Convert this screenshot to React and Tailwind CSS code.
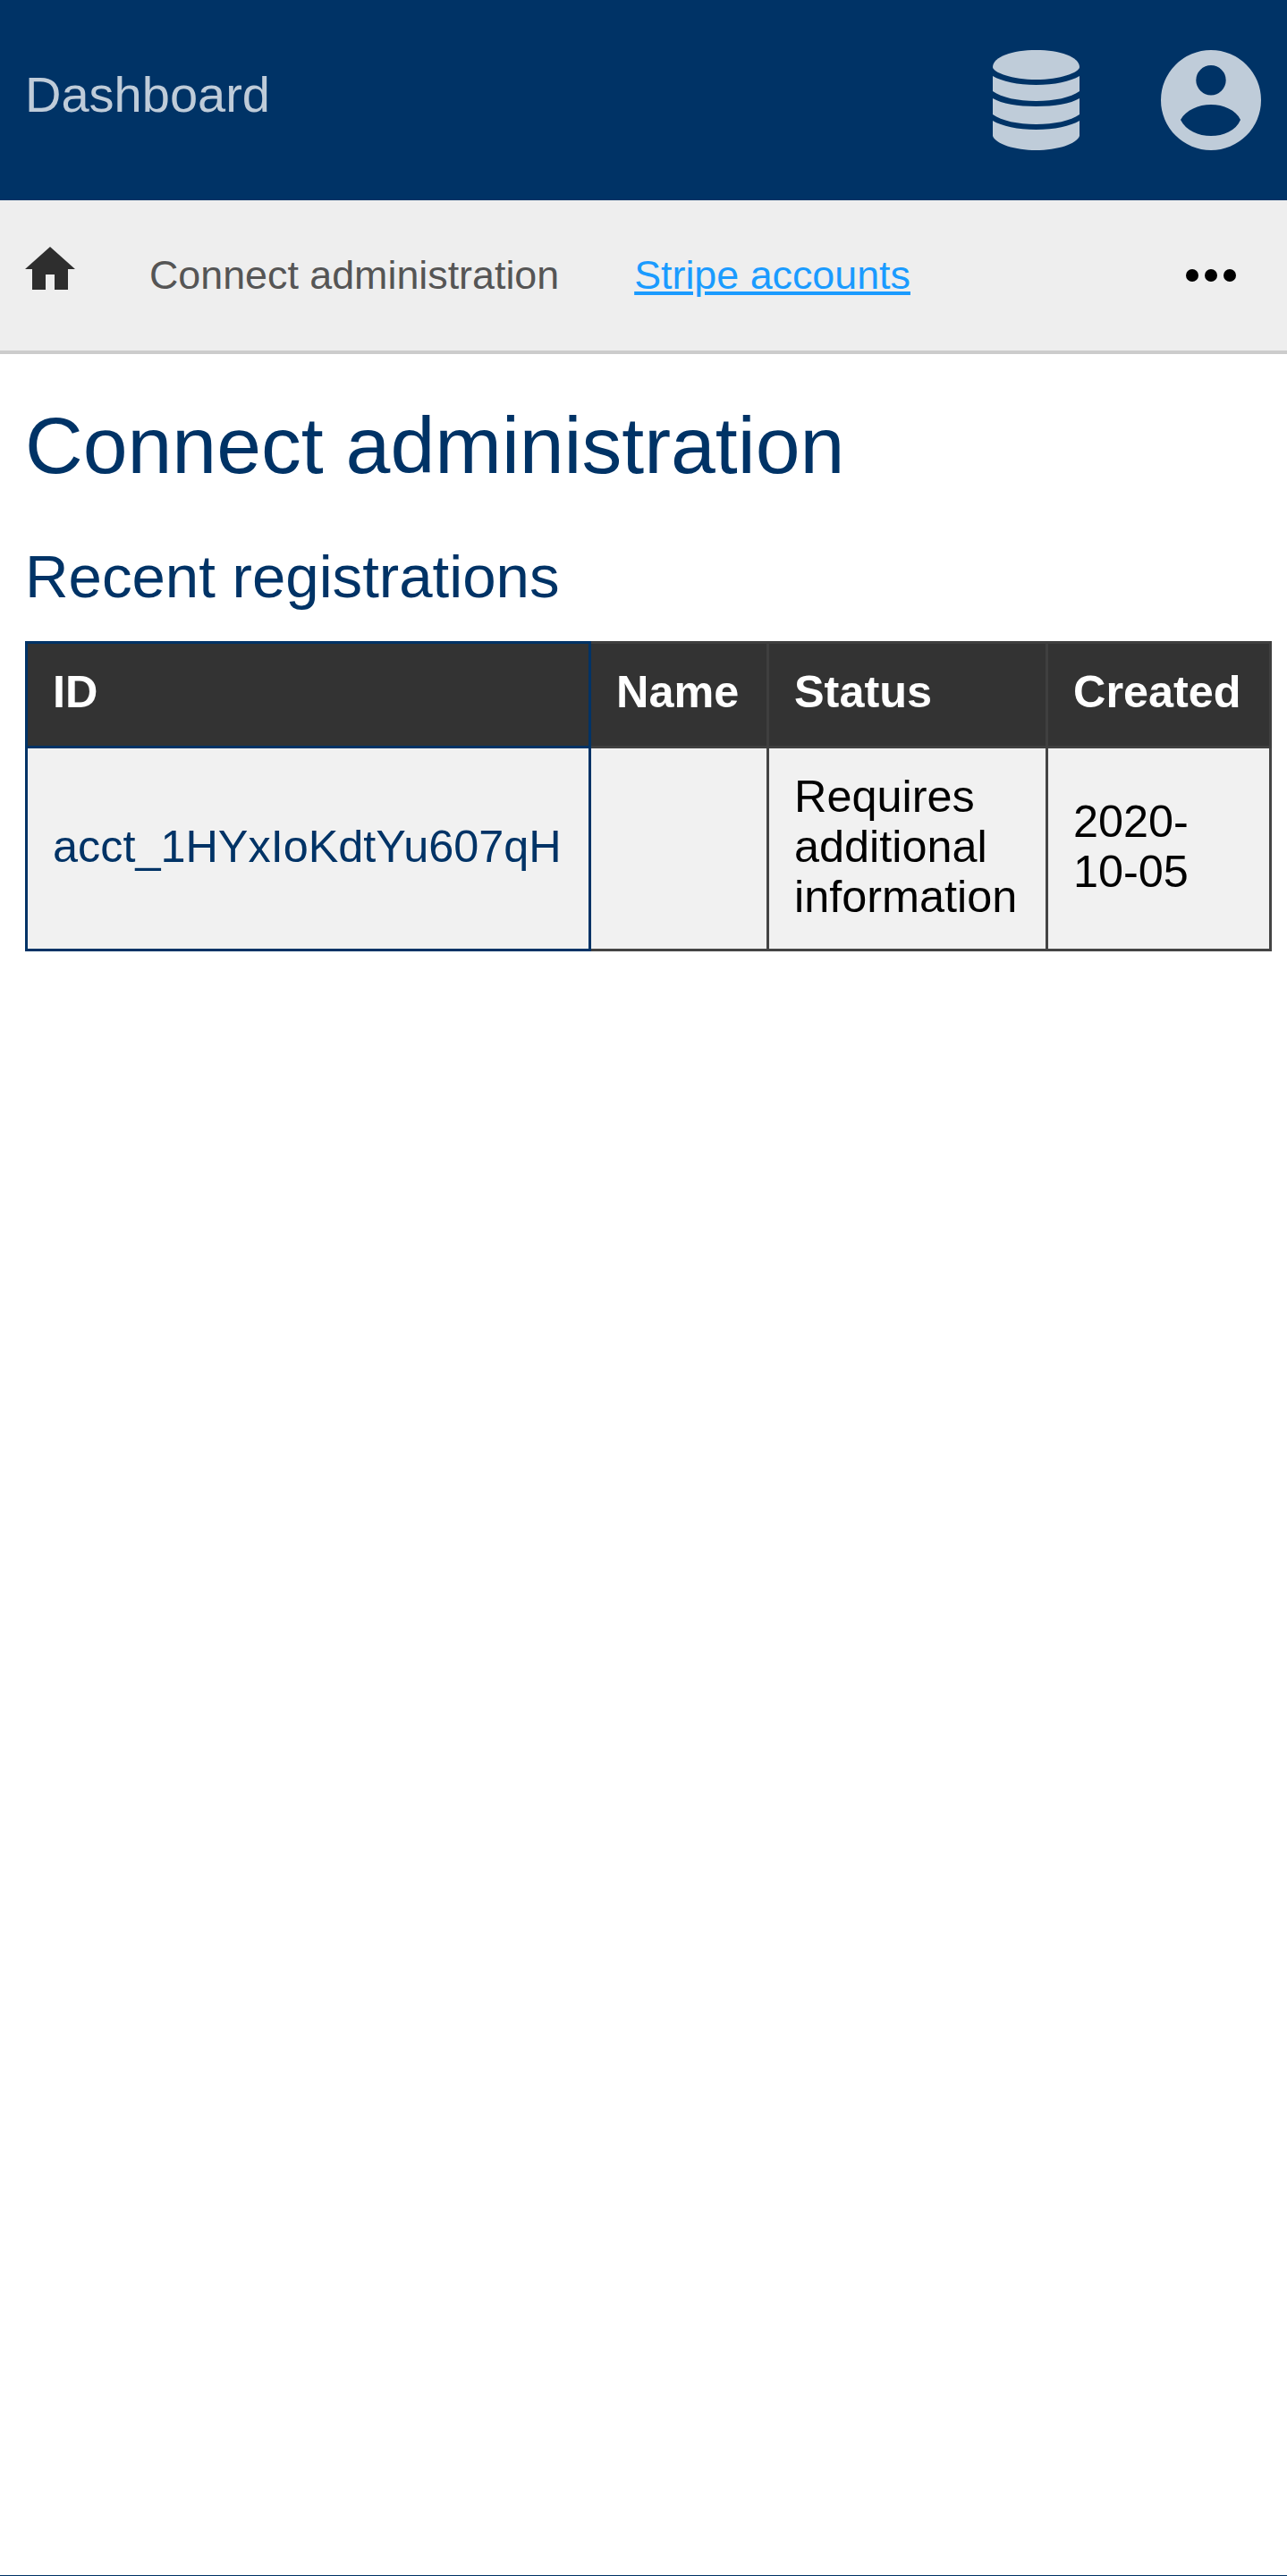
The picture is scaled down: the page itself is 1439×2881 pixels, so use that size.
import React from "react";

function DatabaseIcon() {
  return (
    <svg viewBox="0 0 97 112" className="w-[97px] h-[112px] fill-[#bfccd9]">
      <path d="M48.5 0C75 0 97 7.5 97 19C97 25 75 33 48.5 33C22 33 0 25 0 19C0 7.5 22 0 48.5 0Z" />
      <path d="M0 29C10 35 28 39 48.5 39C69 39 87 35 97 29V46C87 53 69 57 48.5 57C28 57 10 53 0 46Z" />
      <path d="M0 54C10 60 28 63 48.5 63C69 63 87 60 97 54V72C87 79 69 83 48.5 83C28 83 10 79 0 72Z" />
      <path d="M0 79C10 85 28 89 48.5 89C69 89 87 85 97 79V96C94 105 72 112 48.5 112C25 112 3 105 0 96Z" />
    </svg>
  );
}

function UserIcon() {
  return (
    <svg viewBox="0 0 112 112" className="w-[112px] h-[112px] fill-[#bfccd9]">
      <path
        fillRule="evenodd"
        d="M56 0A56 56 0 1 1 56 112A56 56 0 1 1 56 0ZM56 17A16.7 16.7 0 1 0 56 50.4A16.7 16.7 0 1 0 56 17ZM22 78C28 90 42 96 56 96C70 96 84 90 89 78C84 67 70 61 56 61C42 61 28 67 22 78Z"
      />
    </svg>
  );
}

function HomeIcon() {
  return (
    <svg viewBox="0 0 56 48" className="w-[56px] h-[48px] mb-[16px] fill-[#2e2e2e]">
      <path d="M28 0L56 25H48V48H33V31H23V48H8V25H0Z" />
    </svg>
  );
}

export default function App() {
  return (
    <div className="min-h-[2881px] flex flex-col bg-white font-['Liberation_Sans',Arial,sans-serif]">
      <header className="h-[224px] bg-[#003366] flex items-center justify-between pl-[28px] pr-[29px]">
        <span className="text-[56px] mb-[12px] text-[#bfccd9]">Dashboard</span>
        <div className="flex items-center gap-[91px]">
          <DatabaseIcon />
          <UserIcon />
        </div>
      </header>

      <nav className="h-[172px] bg-[#eeeeee] border-b-[4px] border-[#cccccc] flex items-center pl-[28px] pr-[57px] text-[44.8px]">
        <HomeIcon />
        <span className="ml-[83px] text-[#555555]">Connect administration</span>
        <a href="#" className="ml-[84px] text-[#1a9bff] underline">
          Stripe accounts
        </a>
        <div className="ml-auto flex gap-[7px]">
          <span className="w-[14px] h-[14px] rounded-full bg-black" />
          <span className="w-[14px] h-[14px] rounded-full bg-black" />
          <span className="w-[14px] h-[14px] rounded-full bg-black" />
        </div>
      </nav>

      <main className="flex-1 pl-[28px] pr-[20px] pt-[50px]">
        <h1 className="text-[89.6px] leading-[104px] text-[#003366]">Connect administration</h1>
        <h2 className="mt-[56px] text-[67.2px] leading-[78px] text-[#003366]">Recent registrations</h2>
        <table className="mt-[33px] w-full table-fixed border-collapse text-[50.4px] leading-[56px]">
          <thead>
            <tr className="bg-[#333333] text-white text-left">
              <th className="w-[630px] px-[28px] pt-[26px] pb-[32px] border-[3px] border-[#003366] font-bold">ID</th>
              <th className="w-[199px] px-[28px] pt-[26px] pb-[32px] border-[3px] border-[#3f3f3f] font-bold">Name</th>
              <th className="w-[312px] px-[28px] pt-[26px] pb-[32px] border-[3px] border-[#3f3f3f] font-bold">Status</th>
              <th className="w-[250px] px-[28px] pt-[26px] pb-[32px] border-[3px] border-[#3f3f3f] font-bold">Created</th>
            </tr>
          </thead>
          <tbody>
            <tr className="bg-[#f1f1f1] text-black">
              <td className="px-[28px] pt-[26px] pb-[30px] border-[3px] border-[#003366] text-[#003366]">acct_1HYxIoKdtYu607qH</td>
              <td className="px-[28px] pt-[26px] pb-[30px] border-[3px] border-[#444444]"></td>
              <td className="px-[28px] pt-[26px] pb-[30px] border-[3px] border-[#444444]">Requires additional information</td>
              <td className="px-[28px] pt-[26px] pb-[30px] border-[3px] border-[#444444]">2020-10-05</td>
            </tr>
          </tbody>
        </table>
      </main>

      <div className="h-px bg-[#003366]" />
    </div>
  );
}
